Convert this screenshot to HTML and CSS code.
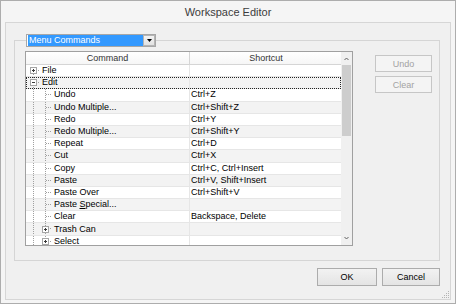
FILE: index.html
```html
<!DOCTYPE html>
<html lang="en">
<head>
  <meta charset="UTF-8">
  <meta name="viewport" content="width=device-width, initial-scale=1.0">
  <title>Workspace Editor</title>
  <link rel="stylesheet" href="styles.css">
</head>
<body>
  <div class="window">
    <div class="titlebar">Workspace Editor</div>

    <div class="client">
      <fieldset class="group">
        <legend>
          <div class="combo">
            <span class="combo-value">Menu Commands</span>
            <span class="combo-button">
              <svg width="5" height="3" viewBox="0 0 5 3"><path d="M0 0h5L2.5 3z" fill="#000"/></svg>
            </span>
          </div>
        </legend>

        <div class="group-body">
          <div class="list">
            <div class="list-main">
              <div class="list-head">
                <div class="col1">Command</div>
                <div class="col2">Shortcut</div>
              </div>

              <div class="row">
                <div class="col1 node"><span class="branch root first"><svg class="exp" viewBox="0 0 7 7"><rect x=".5" y=".5" width="6" height="6"/><path d="M2 3.5h3M3.5 2v3"/></svg></span>File</div>
                <div class="col2"></div>
              </div>
              <div class="row alt focus">
                <div class="col1 node"><span class="branch root"><svg class="exp" viewBox="0 0 7 7"><rect x=".5" y=".5" width="6" height="6"/><path d="M2 3.5h3"/></svg></span>Edit</div>
                <div class="col2"></div>
              </div>
              <div class="row">
                <div class="col1 node"><span class="rail"></span><span class="branch"></span>Undo</div>
                <div class="col2">Ctrl+Z</div>
              </div>
              <div class="row alt">
                <div class="col1 node"><span class="rail"></span><span class="branch"></span>Undo Multiple...</div>
                <div class="col2">Ctrl+Shift+Z</div>
              </div>
              <div class="row">
                <div class="col1 node"><span class="rail"></span><span class="branch"></span>Redo</div>
                <div class="col2">Ctrl+Y</div>
              </div>
              <div class="row alt">
                <div class="col1 node"><span class="rail"></span><span class="branch"></span>Redo Multiple...</div>
                <div class="col2">Ctrl+Shift+Y</div>
              </div>
              <div class="row">
                <div class="col1 node"><span class="rail"></span><span class="branch"></span>Repeat</div>
                <div class="col2">Ctrl+D</div>
              </div>
              <div class="row alt">
                <div class="col1 node"><span class="rail"></span><span class="branch"></span>Cut</div>
                <div class="col2">Ctrl+X</div>
              </div>
              <div class="row">
                <div class="col1 node"><span class="rail"></span><span class="branch"></span>Copy</div>
                <div class="col2">Ctrl+C, Ctrl+Insert</div>
              </div>
              <div class="row alt">
                <div class="col1 node"><span class="rail"></span><span class="branch"></span>Paste</div>
                <div class="col2">Ctrl+V, Shift+Insert</div>
              </div>
              <div class="row">
                <div class="col1 node"><span class="rail"></span><span class="branch"></span>Paste Over</div>
                <div class="col2">Ctrl+Shift+V</div>
              </div>
              <div class="row alt">
                <div class="col1 node"><span class="rail"></span><span class="branch"></span>Paste&nbsp;<u>S</u>pecial...</div>
                <div class="col2"></div>
              </div>
              <div class="row">
                <div class="col1 node"><span class="rail"></span><span class="branch"></span>Clear</div>
                <div class="col2">Backspace, Delete</div>
              </div>
              <div class="row alt">
                <div class="col1 node"><span class="rail"></span><span class="branch"><svg class="exp" viewBox="0 0 7 7"><rect x=".5" y=".5" width="6" height="6"/><path d="M2 3.5h3M3.5 2v3"/></svg></span>Trash Can</div>
                <div class="col2"></div>
              </div>
              <div class="row">
                <div class="col1 node"><span class="rail"></span><span class="branch"><svg class="exp" viewBox="0 0 7 7"><rect x=".5" y=".5" width="6" height="6"/><path d="M2 3.5h3M3.5 2v3"/></svg></span>Select</div>
                <div class="col2"></div>
              </div>
            </div>

            <div class="scroll">
              <span class="scroll-arrow"><svg width="5" height="3" viewBox="0 0 5 3"><path d="M0.5 3L2.5 1L4.5 3" fill="none" stroke="#606060"/></svg></span>
              <span class="scroll-thumb"></span>
              <span class="scroll-arrow down"><svg width="5" height="3" viewBox="0 0 5 3"><path d="M0.5 0L2.5 2L4.5 0" fill="none" stroke="#606060"/></svg></span>
            </div>
          </div>

          <div class="side">
            <button class="btn" disabled>Undo</button>
            <button class="btn" disabled>Clear</button>
          </div>
        </div>
      </fieldset>

      <div class="actions">
        <button class="btn ok">OK</button>
        <button class="btn cancel">Cancel</button>
      </div>

      <svg class="grip" width="8" height="8" viewBox="0 0 8 8">
        <rect x="6" y="0" width="1" height="1"/>
        <rect x="4" y="2" width="1" height="1"/>
        <rect x="6" y="2" width="1" height="1"/>
        <rect x="2" y="4" width="1" height="1"/>
        <rect x="4" y="4" width="1" height="1"/>
        <rect x="6" y="4" width="1" height="1"/>
        <rect x="0" y="6" width="1" height="1"/>
        <rect x="2" y="6" width="1" height="1"/>
        <rect x="4" y="6" width="1" height="1"/>
        <rect x="6" y="6" width="1" height="1"/>
      </svg>
    </div>
  </div>
</body>
</html>
```

FILE: styles.css
```css
:root {
  --frame: #f5f5f5;
  --client: #f0f0f0;
  --line: #d5d5d5;
  --tree-line: #a0a0a0;
  --alt-row: #f3f3f3;
}

* {
  box-sizing: border-box;
}

body {
  margin: 0;
  font-family: "Liberation Sans", Arial, sans-serif;
  font-size: 9px;
  color: #000;
  background: #fff;
}

.window {
  width: 456px;
  height: 304px;
  display: flex;
  flex-direction: column;
  padding: 0 4px 3px;
  border: 1px solid #adadad;
  background: var(--frame);
}

.titlebar {
  height: 21px;
  display: flex;
  align-items: center;
  justify-content: center;
  font-size: 11px;
  color: #3c3c3c;
}

.client {
  position: relative;
  flex: 1;
  display: flex;
  flex-direction: column;
  padding: 11px 10px 0 8px;
  border: 1px solid #d6d6d6;
  background: var(--client);
}

/* group box with the combo sitting on its top edge */
.group {
  margin: 0;
  min-width: 0;
  padding: 4px 7px 14px 10px;
  border: 1px solid var(--line);
}

.group legend {
  padding: 0;
  margin-left: 1px;
}

.combo {
  display: flex;
  width: 130px;
  height: 13px;
  padding-left: 1px;
  border: 1px solid #a7a7a7;
  background: #fff;
}

.combo-value {
  flex: 1;
  padding-left: 1px;
  line-height: 11px;
  color: #fff;
  background: #3399ff;
}

.combo-button {
  width: 12px;
  display: flex;
  align-items: center;
  justify-content: center;
  border: 1px solid #b5b5b5;
  background: linear-gradient(#f4f4f4, #e2e2e2);
}

.group-body {
  display: flex;
  align-items: flex-start;
}

/* list view */
.list {
  width: 328px;
  height: 195px;
  display: flex;
  border: 1px solid #a0a0a0;
  background: #fff;
}

.list-main {
  width: 315px;
  overflow: hidden;
}

.list-head {
  display: flex;
  height: 13px;
  line-height: 12px;
  color: #333;
  border-bottom: 1px solid var(--line);
  background: linear-gradient(#fff, #f6f6f6);
}

.list-head .col1,
.list-head .col2 {
  text-align: center;
}

.list-head .col1 {
  border-right-color: var(--line);
}

.col1 {
  width: 164px;
  flex: none;
  border-right: 1px solid #e6e6e6;
}

.col2 {
  width: 151px;
  flex: none;
  padding-left: 1px;
  white-space: nowrap;
}

.row {
  display: flex;
  height: 12.2px;
  line-height: 11px;
  border-bottom: 1px solid #e6e6e6;
}

.row.alt {
  background: var(--alt-row);
}

.row.focus {
  outline: 1px dotted #222;
  outline-offset: -1px;
}

/* tree column */
.node {
  display: flex;
  align-items: center;
  white-space: nowrap;
}

.rail {
  width: 12px;
  flex: none;
  align-self: stretch;
  background: repeating-linear-gradient(var(--tree-line) 0 1px, transparent 1px 2px) 7px 0 / 1px 100% no-repeat;
}

.branch {
  width: 16px;
  flex: none;
  align-self: stretch;
  display: flex;
  align-items: center;
  padding-left: 4px;
  background:
    repeating-linear-gradient(var(--tree-line) 0 1px, transparent 1px 2px) 7px 0 / 1px 100% no-repeat,
    repeating-linear-gradient(to right, var(--tree-line) 0 1px, transparent 1px 2px) 8px 5px / 6px 1px no-repeat;
}

.branch.first {
  background:
    repeating-linear-gradient(var(--tree-line) 0 1px, transparent 1px 2px) 7px 5px / 1px 100% no-repeat,
    repeating-linear-gradient(to right, var(--tree-line) 0 1px, transparent 1px 2px) 8px 5px / 6px 1px no-repeat;
}

.exp {
  width: 7px;
  height: 7px;
  flex: none;
}

.exp rect {
  fill: #fff;
  stroke: #a5a5a5;
}

.exp path {
  stroke: #3a3a3a;
}

/* scrollbar */
.scroll {
  width: 11px;
  display: flex;
  flex-direction: column;
  background: #f0f0f0;
}

.scroll-arrow {
  height: 13px;
  display: flex;
  align-items: center;
  justify-content: center;
}

.scroll-arrow.down {
  margin-top: auto;
}

.scroll-thumb {
  height: 71px;
  margin: 0 1px;
  background: #cdcdcd;
}

/* buttons */
.side {
  display: flex;
  flex-direction: column;
  gap: 4px;
  margin: 4px 0 0 22px;
}

.btn {
  width: 57px;
  height: 17px;
  padding: 0;
  font: inherit;
  color: #000;
  border: 1px solid #acacac;
  background: linear-gradient(#f2f2f2, #e4e4e4);
}

.btn:disabled {
  color: #a3a3a3;
  border-color: #c6c6c6;
  background: #f4f4f4;
}

.actions {
  display: flex;
  justify-content: flex-end;
  gap: 5px;
  margin-top: 7px;
}

.actions .btn {
  height: 18px;
}

.ok {
  width: 60px;
}

.cancel {
  width: 58px;
}

.grip {
  position: absolute;
  right: 0;
  bottom: 0;
  fill: #b4b4b4;
}
```
